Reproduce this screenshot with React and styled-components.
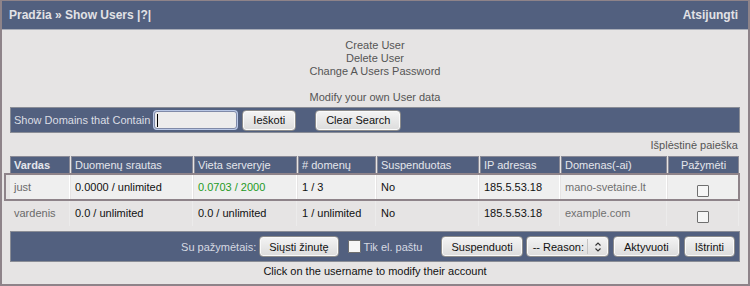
import React from "react";
import styled, { createGlobalStyle } from "styled-components";

const Global = createGlobalStyle`
  html, body { margin: 0; padding: 0; background: #e6e4e4; }
  body { font-family: "Liberation Sans", Arial, sans-serif; font-size: 11px; color: #222; }
`;

const Frame = styled.div`
  width: 750px;
  height: 286px;
  box-sizing: border-box;
  border: 2px solid #8e8389;
  border-top-width: 1px;
  background: #e6e4e4;
  display: flex;
  flex-direction: column;
`;

const TopBar = styled.div`
  height: 28px;
  background: #52607f;
  border-bottom: 1px solid #a9adb8;
  display: flex;
  align-items: center;
  justify-content: space-between;
  padding: 0 10px 0 7px;
  color: #e2e2e6;
  font-weight: bold;
  font-size: 12px;
`;

const Content = styled.div`
  padding: 9px 8px 0 8px;
  display: flex;
  flex-direction: column;
`;

const Links = styled.div`
  display: flex;
  flex-direction: column;
  align-items: center;
  line-height: 13px;
  color: #555;
`;

const LinkItem = styled.span`
  margin-top: ${(p) => (p.$gap ? "13px" : "0")};
`;

const SearchBar = styled.div`
  margin-top: 3px;
  height: 24px;
  background: #52607f;
  border: 1px solid #8a8d96;
  display: flex;
  align-items: center;
  padding: 0 3px;
  color: #dcdee4;
`;

const SearchLabel = styled.span`
  margin-right: 3px;
`;

const TextInput = styled.div`
  width: 79px;
  height: 16px;
  background: #ececec;
  border: 1px solid #7f8aa8;
  box-shadow: 0 0 0 1px #b9c8e6;
  border-radius: 3px;
  display: flex;
  align-items: center;
  padding-left: 2px;
  margin: 0 5px 0 1px;
`;

const Caret = styled.span`
  width: 1px;
  height: 13px;
  background: #000;
`;

const Button = styled.button`
  height: 21px;
  box-sizing: border-box;
  padding: 0 ${(p) => p.$pad || 9}px;
  margin: 0 0 0 ${(p) => p.$ml || 0}px;
  border: 1px solid #8c8c8c;
  border-radius: 4px;
  background: linear-gradient(#f4f4f4, #dcdcdc);
  box-shadow: inset 0 0 0 1px #fafafa;
  font-family: "Liberation Sans", Arial, sans-serif;
  font-size: 11px;
  color: #111;
  cursor: pointer;
`;

const Advanced = styled.div`
  text-align: right;
  color: #555;
  line-height: 13px;
  margin-top: 6px;
  padding-right: 2px;
`;

const TableWrap = styled.div`
  position: relative;
  margin-top: 4px;
`;

const Table = styled.table`
  table-layout: fixed;
  width: 731px;
  border-collapse: separate;
  border-spacing: 1px 0;
  margin-left: -1px;
  font-size: 11px;
`;

const Th = styled.th`
  box-sizing: border-box;
  height: 18px;
  background: #52607f;
  border: 1px solid #8a8a96;
  color: #e4e6ec;
  font-weight: ${(p) => (p.$bold ? "bold" : "normal")};
  text-align: ${(p) => (p.$center ? "center" : "left")};
  padding: 0 3px;
  width: ${(p) => p.$w}px;
`;

const Tr = styled.tr`
  background: ${(p) => (p.$hl ? "#efefef" : "#e6e4e4")};
`;

const Td = styled.td`
  height: 26px;
  box-sizing: border-box;
  vertical-align: top;
  padding: 7px 4px 0 4px;
  line-height: 13px;
  color: ${(p) => p.$color || "#111"};
  border-right: 1px solid ${(p) => (p.$hl ? "#ffffff" : "#ecebeb")};
  text-align: ${(p) => (p.$center ? "center" : "left")};
`;

const RowHighlight = styled.div`
  position: absolute;
  left: -6px;
  top: 17px;
  width: 736px;
  height: 28px;
  box-sizing: border-box;
  border: 2px solid #8e8389;
  pointer-events: none;
`;

const Box = styled.span`
  display: inline-block;
  box-sizing: border-box;
  width: ${(p) => p.$size || 12}px;
  height: ${(p) => p.$size || 12}px;
  border: 1px solid #6f6f6f;
  background: #f6f6f6;
  border-radius: 1px;
  margin-top: ${(p) => p.$mt || 0}px;
  vertical-align: top;
`;

const ActionBar = styled.div`
  margin-top: 5px;
  height: 29px;
  background: #52607f;
  border: 1px solid #8a8d96;
  display: flex;
  align-items: center;
  justify-content: flex-end;
  padding-right: 4px;
  color: #d6d9e2;
`;

const ActionLabel = styled.span`
  margin-right: 3px;
`;

const CheckLabel = styled.label`
  display: flex;
  align-items: center;
  margin-left: 9px;
  margin-right: 19px;
  gap: 3px;
`;

const Select = styled.div`
  height: 21px;
  box-sizing: border-box;
  margin-left: 3px;
  border: 1px solid #8c8c8c;
  border-radius: 4px;
  background: linear-gradient(#f4f4f4, #dcdcdc);
  box-shadow: inset 0 0 0 1px #fafafa;
  display: flex;
  align-items: center;
  font-size: 11px;
  color: #111;
  padding-left: 6px;
`;

const SelectArrow = styled.span`
  margin-left: 3px;
  width: 20px;
  height: 15px;
  border-left: 1px solid #c4c4c4;
  display: flex;
  align-items: center;
  justify-content: center;
`;

const Footer = styled.div`
  text-align: center;
  color: #111;
  line-height: 13px;
  margin-top: 3px;
`;

const cols = [
  { t: "Vardas", w: 60, bold: true },
  { t: "Duomenų srautas", w: 122 },
  { t: "Vieta serveryje", w: 103 },
  { t: "# domenų", w: 78 },
  { t: "Suspenduotas", w: 102 },
  { t: "IP adresas", w: 80 },
  { t: "Domenas(-ai)", w: 106 },
  { t: "Pažymėti", w: 71, center: true },
];

const rows = [
  { hl: true, cells: ["just", "0.0000 / unlimited", "0.0703 / 2000", "1 / 3", "No", "185.5.53.18", "mano-svetaine.lt"] },
  { hl: false, cells: ["vardenis", "0.0 / unlimited", "0.0 / unlimited", "1 / unlimited", "No", "185.5.53.18", "example.com"] },
];

const colorFor = (i, v) => {
  if (i === 0) return "#6a6a6a";
  if (i === 6) return "#707070";
  if (i === 2 && v.includes("2000")) return "#1f9a1f";
  return "#111";
};

export default function App() {
  return (
    <>
      <Global />
      <Frame>
        <TopBar>
          <span>Pradžia » Show Users |?|</span>
          <span>Atsijungti</span>
        </TopBar>
        <Content>
          <Links>
            <LinkItem>Create User</LinkItem>
            <LinkItem>Delete User</LinkItem>
            <LinkItem>Change A Users Password</LinkItem>
            <LinkItem $gap>Modify your own User data</LinkItem>
          </Links>
          <SearchBar>
            <SearchLabel>Show Domains that Contain</SearchLabel>
            <TextInput><Caret /></TextInput>
            <Button $pad={10}>Ieškoti</Button>
            <Button $ml={19} $pad={10}>Clear Search</Button>
          </SearchBar>
          <Advanced>Išplėstinė paieška</Advanced>
          <TableWrap>
            <Table>
              <thead>
                <tr>
                  {cols.map((c) => (
                    <Th key={c.t} $w={c.w} $bold={c.bold} $center={c.center}>{c.t}</Th>
                  ))}
                </tr>
              </thead>
              <tbody>
                {rows.map((r, ri) => (
                  <Tr key={ri} $hl={r.hl}>
                    {r.cells.map((v, i) => (
                      <Td key={i} $hl={r.hl} $color={colorFor(i, v)}>{v}</Td>
                    ))}
                    <Td $hl={r.hl} $center><Box $mt={4} /></Td>
                  </Tr>
                ))}
              </tbody>
            </Table>
            <RowHighlight />
          </TableWrap>
          <ActionBar>
            <ActionLabel>Su pažymėtais:</ActionLabel>
            <Button $pad={9}>Siųsti žinutę</Button>
            <CheckLabel><Box $size={13} />Tik el. paštu</CheckLabel>
            <Button $pad={9}>Suspenduoti</Button>
            <Select>
              -- Reason:
              <SelectArrow>
                <svg width="8" height="12" viewBox="0 0 8 12" fill="none" stroke="#333" strokeWidth="1.1">
                  <path d="M1.5 4.5 L4 2 L6.5 4.5" />
                  <path d="M1.5 7.5 L4 10 L6.5 7.5" />
                </svg>
              </SelectArrow>
            </Select>
            <Button $ml={4} $pad={10}>Aktyvuoti</Button>
            <Button $ml={4} $pad={10}>Ištrinti</Button>
          </ActionBar>
          <Footer>Click on the username to modify their account</Footer>
        </Content>
      </Frame>
    </>
  );
}
